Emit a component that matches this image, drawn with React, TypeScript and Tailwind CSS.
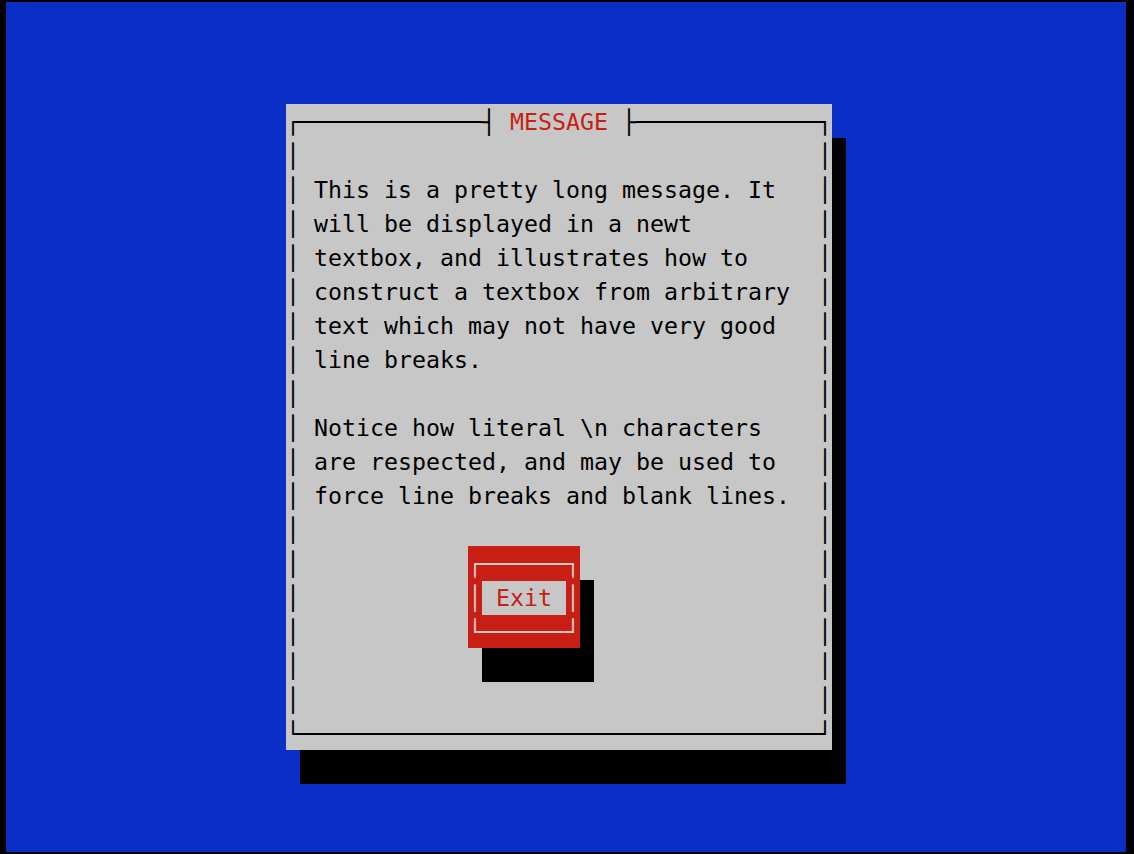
const lines = [
  '',
  'This is a pretty long message. It',
  'will be displayed in a newt',
  'textbox, and illustrates how to',
  'construct a textbox from arbitrary',
  'text which may not have very good',
  'line breaks.',
  '',
  'Notice how literal \\n characters',
  'are respected, and may be used to',
  'force line breaks and blank lines.',
  '',
];

function Line({ text }: { text: string }) {
  return <div className="h-[34px]">{'│ ' + text.padEnd(36) + '│'}</div>;
}

function ExitButton() {
  return (
    <div className="bg-[#c81e14] text-[#d2caca] shadow-[14px_34px_0_0_#000]">
      <div className="h-[34px]">{'┌──────┐'}</div>
      <div className="h-[34px]">
        {'│'}
        <span className="bg-[#c7c7c7] text-[#c81e14] leading-[34px] inline-block">{' Exit '}</span>
        {'│'}
      </div>
      <div className="h-[34px]">{'└──────┘'}</div>
    </div>
  );
}

export default function App() {
  const dashes = '─'.repeat(13);

  return (
    <div className="w-[1134px] h-[854px] bg-black pt-[2px] pl-[6px]">
      <div className="w-[1120px] h-[850px] bg-[#0a2ec6] pt-[102px] pl-[280px]">
        <div
          className="w-[546px] bg-[#c7c7c7] text-black whitespace-pre text-[23.25px] leading-[36px] shadow-[14px_34px_0_0_#000]"
          style={{ fontFamily: '"DejaVu Sans Mono", "Liberation Mono", monospace' }}
        >
          <div className="h-[34px]">
            {'┌' + dashes + '┤ '}
            <span className="text-[#c81e14]">MESSAGE</span>
            {' ├' + dashes + '┐'}
          </div>
          {lines.map((l, i) => (
            <Line key={i} text={l} />
          ))}
          <div className="flex">
            <div>
              {[0, 1, 2].map((i) => (
                <div key={i} className="h-[34px]">{'│' + ' '.repeat(12)}</div>
              ))}
            </div>
            <ExitButton />
            <div>
              {[0, 1, 2].map((i) => (
                <div key={i} className="h-[34px]">{' '.repeat(17) + '│'}</div>
              ))}
            </div>
          </div>
          <Line text="" />
          <Line text="" />
          <div className="h-[34px]">{'└' + '─'.repeat(37) + '┘'}</div>
        </div>
      </div>
    </div>
  );
}
